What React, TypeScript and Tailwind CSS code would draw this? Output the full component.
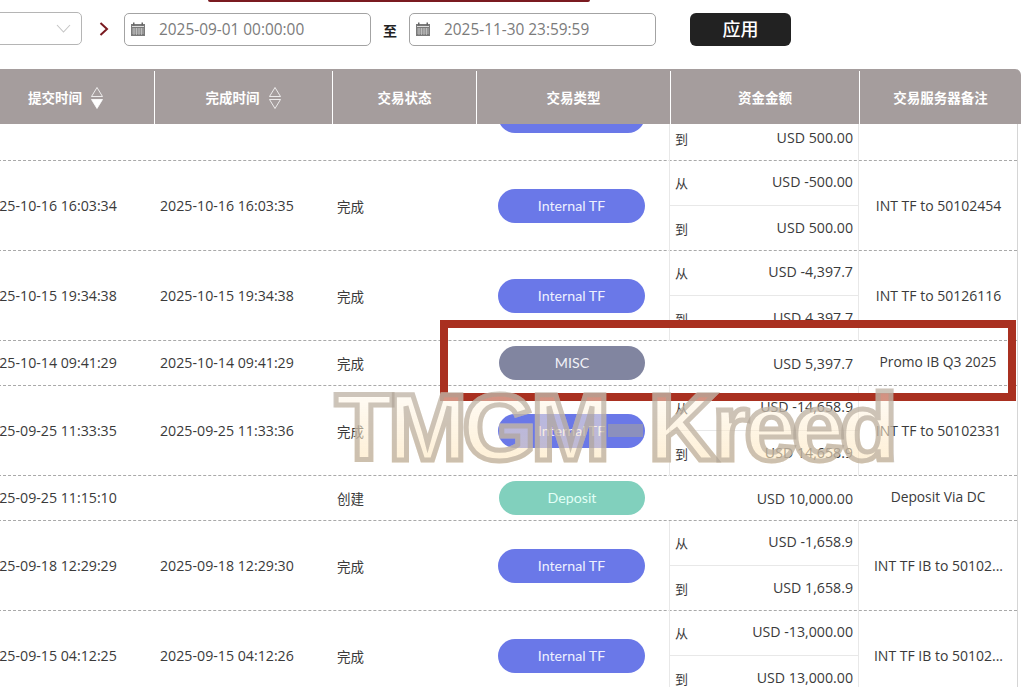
const ff = "font-['Open_Sans','Noto_Sans_CJK_SC',sans-serif]";

function Cal() {
  return (
    <svg width="16" height="15" viewBox="0 0 16 15" className="shrink-0">
      <rect x="1" y="2" width="14" height="12" fill="#7a7a7a" />
      <rect x="3" y="0.5" width="1.5" height="3" fill="#666" />
      <rect x="11.5" y="0.5" width="1.5" height="3" fill="#666" />
      <rect x="2" y="4" width="12" height="1" fill="#ddd" />
      <path d="M2 7h12M2 9h12M2 11h12M4 6v7M6.5 6v7M9 6v7M11.5 6v7" stroke="#d8d8d8" strokeWidth="0.6" />
    </svg>
  );
}

function DateInput({ value }: { value: string }) {
  return (
    <div className="flex h-[33px] w-[247px] items-center rounded-[5px] border border-[#a3a3a3] pl-[5px]">
      <Cal />
      <span className="ml-[13px] text-[15.4px] text-[#7b7b7b]">{value}</span>
    </div>
  );
}

function Sort({ down }: { down?: boolean }) {
  return (
    <svg width="14" height="24" viewBox="0 0 14 24" className="ml-[8px] shrink-0">
      <path d="M7 1.5 12.5 10.5H1.5Z" fill="none" stroke="#fff" strokeWidth="0.8" />
      <path d="M1.5 13.5H12.5L7 22.5Z" fill={down ? "#fff" : "none"} stroke="#fff" strokeWidth="0.8" />
    </svg>
  );
}

type Row = {
  a: string;
  b: string;
  status: string;
  type: "tf" | "misc" | "dep";
  from?: string;
  to?: string;
  amount?: string;
  note: string;
};

const rows: Row[] = [
  { a: "2025-10-17 10:20:11", b: "2025-10-17 10:20:12", status: "完成", type: "tf", from: "USD -500.00", to: "USD 500.00", note: "" },
  { a: "2025-10-16 16:03:34", b: "2025-10-16 16:03:35", status: "完成", type: "tf", from: "USD -500.00", to: "USD 500.00", note: "INT TF to 50102454" },
  { a: "2025-10-15 19:34:38", b: "2025-10-15 19:34:38", status: "完成", type: "tf", from: "USD -4,397.7", to: "USD 4,397.7", note: "INT TF to 50126116" },
  { a: "2025-10-14 09:41:29", b: "2025-10-14 09:41:29", status: "完成", type: "misc", amount: "USD 5,397.7", note: "Promo IB Q3 2025" },
  { a: "2025-09-25 11:33:35", b: "2025-09-25 11:33:36", status: "完成", type: "tf", from: "USD -14,658.9", to: "USD 14,658.9", note: "INT TF to 50102331" },
  { a: "2025-09-25 11:15:10", b: "", status: "创建", type: "dep", amount: "USD 10,000.00", note: "Deposit Via DC" },
  { a: "2025-09-18 12:29:29", b: "2025-09-18 12:29:30", status: "完成", type: "tf", from: "USD -1,658.9", to: "USD 1,658.9", note: "INT TF IB to 50102..." },
  { a: "2025-09-15 04:12:25", b: "2025-09-15 04:12:26", status: "完成", type: "tf", from: "USD -13,000.00", to: "USD 13,000.00", note: "INT TF IB to 50102..." },
];

function Pill({ type }: { type: Row["type"] }) {
  if (type === "tf")
    return <div className="ml-[22px] flex h-[34px] w-[147px] items-center justify-center rounded-[17px] bg-[#6a78e8] pb-[1px] font-['Lato',sans-serif] text-[14.2px] text-[#eef0ff]">Internal TF</div>;
  if (type === "misc")
    return <div className="ml-[23px] flex h-[34px] w-[146px] items-center justify-center rounded-[17px] bg-[#8185a0] pb-[1px] font-['Lato',sans-serif] text-[14.2px] text-[#f2f2f8]">MISC</div>;
  return <div className="ml-[23px] flex h-[34px] w-[146px] items-center justify-center rounded-[17px] bg-[#81d0bd] pb-[1px] font-['Lato',sans-serif] text-[14.2px] text-[#e2fff6]">Deposit</div>;
}

function MoneyLine({ label, value, border }: { label: string; value: string; border?: boolean }) {
  return (
    <div className={border ? "flex h-[45px] items-center justify-between border-b border-[#e8e8e8] pl-[5px] pr-[5px]" : "flex h-[45px] items-center justify-between pl-[5px] pr-[5px]"}>
      <span className="mt-[2px] text-[13px]">{label}</span>
      <span className="-mt-[2px]">{value}</span>
    </div>
  );
}

function TableRow({ r }: { r: Row }) {
  const split = !!r.from;
  return (
    <div className={split
      ? "grid h-[90px] grid-cols-[177px_177px_144px_193px_189px_160px] items-stretch border-b border-dashed border-[#a9a9a9]"
      : "grid h-[45px] grid-cols-[177px_177px_144px_193px_189px_160px] items-stretch border-b border-dashed border-[#a9a9a9]"}>
      <div className="flex items-center pl-[5px]">{r.a}</div>
      <div className="flex items-center pl-[5px]">{r.b}</div>
      <div className="flex items-center pl-[5px] pt-[2px] text-[13.5px]">{r.status}</div>
      <div className="flex items-center"><Pill type={r.type} /></div>
      {split ? (
        <div className="border-l border-[#e8e8e8]">
          <MoneyLine label="从" value={r.from!} border />
          <MoneyLine label="到" value={r.to!} />
        </div>
      ) : (
        <div className="flex items-center justify-end pr-[5px] pt-[1px]">{r.amount}</div>
      )}
      <div className={split
        ? "flex items-center justify-center whitespace-nowrap border-l border-[#e8e8e8] pb-[1px] text-[14px]"
        : "flex items-center justify-center whitespace-nowrap pb-[2px] text-[13.8px]"}>{r.note}</div>
    </div>
  );
}

const heads = [
  { t: "提交时间", s: "down", c: "w-[177px] border-r" },
  { t: "完成时间", s: "up", c: "w-[178px] border-r" },
  { t: "交易状态", c: "w-[144px] border-r" },
  { t: "交易类型", c: "w-[194px] border-r" },
  { t: "资金金额", c: "w-[189px] border-r" },
  { t: "交易服务器备注", c: "w-[161px]" },
];

export default function App() {
  return (
    <div className={`relative h-[687px] w-[1021px] overflow-hidden bg-white text-[#3a3a3a] ${ff}`}>
      <div className="ml-[208px] h-[2px] w-[382px] rounded-b-[6px] bg-[#7a1a20]" />
      <div className="flex h-[67px] items-start pt-[10px]">
        <div className="-ml-[20px] flex h-[33px] w-[102px] items-center justify-end rounded-[5px] border border-[#b5b5b5] pr-[10px]">
          <svg width="15" height="9" viewBox="0 0 15 9"><path d="M1 1 7.5 8 14 1" fill="none" stroke="#c4c4c4" strokeWidth="1.1" /></svg>
        </div>
        <svg width="10" height="14" viewBox="0 0 10 14" className="ml-[17px] mt-[10px]"><path d="M1.5 1 8 7 1.5 13" fill="none" stroke="#7a1a20" strokeWidth="2" /></svg>
        <div className="ml-[15px] mt-[1px]"><DateInput value="2025-09-01 00:00:00" /></div>
        <span className="ml-[12px] mt-[8px] text-[14px] font-bold text-[#222]">至</span>
        <div className="ml-[12px] mt-[1px]"><DateInput value="2025-11-30 23:59:59" /></div>
        <div className="ml-[34px] mt-[1px] flex h-[33px] w-[101px] items-center justify-center rounded-[6px] bg-[#222222] text-[18px] font-medium text-white">应用</div>
      </div>

      <div className="-ml-[22px] w-[1043px]">
        <div className="relative z-10 flex h-[55px] rounded-tr-[6px] bg-[#a59d9d] pt-[2px]">
          {heads.map((h) => (
            <div key={h.t} className={`flex items-center justify-center border-white pt-[1px] text-[13.5px] font-bold text-white ${h.c}`}>
              {h.t}
              {h.s === "down" && <Sort down />}
              {h.s === "up" && <Sort />}
            </div>
          ))}
        </div>
        <div className="h-[563px] w-[1040px] overflow-hidden border-r border-[#d5d5d5] text-[14.2px]">
          <div className="-mt-[53px]">
            {rows.map((r) => <TableRow key={r.a} r={r} />)}
          </div>
        </div>
      </div>

      <div className="absolute left-[440px] top-[320px] h-[81px] w-[576px] border-[8px] border-[#a93020]" />
      <div className="absolute left-[335px] top-[370px] whitespace-nowrap bg-gradient-to-b from-[rgba(255,255,255,0.45)] to-[rgba(253,225,175,0.65)] bg-clip-text font-['Liberation_Sans',sans-serif] text-[95px] font-bold leading-[115px] tracking-[-5px] text-transparent [word-spacing:22px] [-webkit-text-stroke:5px_rgba(172,160,146,0.6)]">
        TMGM Kreed
      </div>
      <div className="absolute left-[608px] top-[424px] h-[13px] w-[35px] bg-[#8c90bd]" />
    </div>
  );
}
